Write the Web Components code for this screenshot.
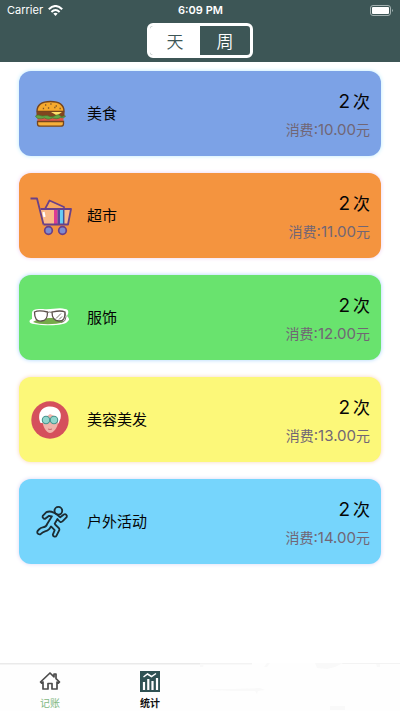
<!DOCTYPE html>
<html lang="zh-CN">
<head>
<meta charset="utf-8">
<meta name="viewport" content="width=device-width, initial-scale=1">
<title>统计</title>
<style>
body{margin:0;background:#fff;color:#050505;font-family:Inter,"Noto Sans CJK SC",sans-serif}
</style>
</head>
<body>
<ledger-app></ledger-app>
<script>
const define=(name,html)=>customElements.define(name,class extends HTMLElement{
  connectedCallback(){
    if(this.shadowRoot)return;
    const t=document.createElement('template');
    t.innerHTML=typeof html==='function'?html(this):html;
    this.attachShadow({mode:'open'}).append(t.content.cloneNode(true));
    const buttons=this.shadowRoot.querySelectorAll('[data-segment]');
    buttons.forEach(b=>b.addEventListener('click',()=>buttons.forEach(o=>o.setAttribute('aria-pressed',String(o===b)))));
  }
});

const icons={
burger:`<path d="M12 17.500C12 10 17 7.500 25.500 7.500S39 10 39 17.500z" fill="#f6a92c" stroke="#74451f" stroke-width="1.400"/><path d="M11.500 18h28v5h-28z" fill="#81451f"/><path d="M26 18h11l-5 3.500z" fill="#ffe16a"/><path d="M12.500 24h26v4h-26z" fill="#e0574a"/><path d="M10.500 22c3-2 5 0 7 0s4-1 6 0 4 1 6 0 4-2 6 0 3-1 5 0c-1 2-3 2-5 1.500-3 2-6 1-8 .5-4 2-6 1-8 0-4 1.500-8 1-9-2z" fill="#61a443" stroke="#426d2c" stroke-width=".6"/><path d="M12.500 27.500h26V30c0 1.500-1 2.200-3 2.200h-20c-2 0-3-.7-3-2.200z" fill="#f7b13a" stroke="#74451f" stroke-width="1.300"/><path d="M20 11h1.300m4-1h1.300m4 2h1.300m-9 2h1.300m5-.5h1.300m4 1h1.300m-18 0h1.300" stroke="#7f5628" stroke-width="1.300"/>`,
cart:`<path d="m20 13 4.500-8.500L39 11v2" fill="#f7a75f" stroke="#6a4088" stroke-width="1.700" stroke-linejoin="round"/><path d="M15.500 13H46l-3 15.500H18.500z" fill="#fab988"/><path d="M29 13h3.500v15H29z" fill="#dc3a94"/><path d="M32.500 13H35v15h-2.500z" fill="#5b4699"/><path d="M35 13h3v15h-3z" fill="#66cdf5"/><path d="M38.700 13v15" stroke="#3d559d" stroke-width="1.500"/><path d="m18.500 16 1 5" stroke="#fff" stroke-width="2.200"/><g fill="none" stroke="#6a4088" stroke-width="1.800" stroke-linejoin="round"><path d="M15.500 13H46l-3 15.500H18.500"/><path d="M5.500 2.500h6.500l6.500 26"/></g><g fill="#7f8cd0" stroke="#6a4088" stroke-width="1.700"><circle cx="23.500" cy="34.500" r="3.800"/><circle cx="37.500" cy="34.500" r="3.800"/></g>`,
glasses:`<path d="M7 15c0-4 5-4 11-4 8 1 16-2 22 0 4 0 4 4 2 7 2 2 3 4 1 5-2 5-23 5-34 3-5 0-6-4-2-5z" fill="#fff"/><path d="M8 24c4-3 12-4 19-4 6 1 10 1 12 4-9 3-24 3-31 0z" fill="#75aa49"/><g fill="#fff" stroke="#5c504b" stroke-width="1.300"><path d="M9.500 14c4-2 9-1 13 0 0 5-1 9-6 9-5 1-7-3-7-9z"/><path d="M27 14c5-1 9-2 13 0 0 6-1 9-6 9s-7-4-7-9z"/></g><path d="M22.500 14.500q2-1 4.500 0m13 0 1 4-1 4-4 2m-5-4 5-5m-2 6 3-3" fill="none" stroke="#79746e"/>`,
face:`<circle cx="25" cy="20" r="18.700" fill="#d5505c"/><path d="M15.500 23c-4-9 1-16.500 9.500-16.500 8 0 12 5 10.500 12l-2 5z" fill="#fff"/><path d="M17.500 19c1-5 4-6 8-6 5 0 7.500 4 7.500 9 0 6-5 11-8 11s-8-6-7.500-14z" fill="#efb3aa"/><path d="M17 18c3-1 6-2 8-4 3 1 6 3 8 4 0-5-3-8-8-8s-8 3-8 8z" fill="#fff"/><g fill="#92d6cd" stroke="#46958f" stroke-width="1.100"><circle cx="21" cy="20" r="3.700"/><circle cx="29" cy="20" r="3.700"/></g><path d="M23 29q2 1 4 0" fill="none" stroke="#c86b71"/>`,
runner:`<g transform="translate(3 .5) scale(.92)" fill="none" stroke="#1d2d33" stroke-width="2" stroke-linecap="round" stroke-linejoin="round"><circle cx="33" cy="9" r="4.200"/><path d="M28 11c-3-1.500-6-1.500-8-.5l-4 4c-1 2 2 4 3 3l4-3 3 .5-5 8c-1 3-2 4-5 4-3 .5-6 4-6 5 0 3 3 3 4 2 3-3 6-2 9-5l2-3 4 4-2 5c0 2 3 3 4 1l3-6c1-3-4-4-5-7l3-5c3 4 4 4 6 2l4-4c1-2-1-4-3-3l-4 3c-2-1-2-3-7-5z"/></g>`
};

define('status-strip',`<style>
:host{display:grid;grid-template-columns:1fr auto 1fr;align-items:center;height:20px;padding:0 6px 0 7px;color:#fff;font-size:11px;line-height:20px}
.left{display:flex;align-items:center;gap:5px}strong{font-weight:600}.battery{justify-self:end}
svg{display:block}</style>
<span class="left"><span>Carrier</span><svg width="15" height="11" viewBox="0 0 15 11" fill="none" stroke="#fff" stroke-width="2" aria-hidden="true"><path d="M.8 4.300Q7.500-2.300 14.200 4.300M3.400 6.900q4.100-3.800 8.200 0"/><path d="M5.300 8.600Q7.500 6.800 9.700 8.600L7.500 11z" fill="#fff" stroke="none"/></svg></span>
<strong>6:09 PM</strong>
<svg class="battery" width="24" height="11" viewBox="0 0 24 11" aria-hidden="true"><rect x=".5" y=".5" width="20" height="10" rx="2.500" fill="none" stroke="#a3b1b1"/><rect x="2" y="2" width="17" height="7" rx="1" fill="#fff"/><path d="M22 4q2 1.500 0 3z" fill="#a3b1b1"/></svg>`);

define('period-switch',`<style>
:host{display:flex;box-sizing:border-box;width:106px;height:35px;border:3px solid #fff;border-radius:6px;overflow:hidden}
button{flex:1;margin:0;padding:0;border:0;border-radius:0;background:transparent;color:#fff;font:350 17px/28px "Noto Sans CJK SC",sans-serif}
button[aria-pressed=true]{background:#fff;color:#3d5656}</style>
<button type="button" data-segment aria-pressed="true">天</button><button type="button" data-segment aria-pressed="false">周</button>`);

define('expense-card',el=>`<style>
:host{display:flex;align-items:center;box-sizing:border-box;height:85px;padding:0 11px 0 6px;border-radius:12px;background:var(--fill);box-shadow:0 0 4px var(--glow)}
svg{width:50px;height:40px;flex:none}
.name{flex:1;margin-left:12px;font-size:15px;line-height:20px}
.totals{padding-top:3px;text-align:right}
.count{display:flex;justify-content:flex-end;align-items:baseline;gap:3px;font-size:17px;line-height:27px}
.count b{font-weight:400;font-size:19px}
.spent{color:#716675;font-size:14px;line-height:27px}
.spent span{font-size:15px}
</style><svg viewBox="0 0 50 40" aria-hidden="true">${icons[el.getAttribute('icon')]}</svg>
<span class="name"><slot></slot></span><div class="totals"><div class="count"><b>2</b><span>次</span></div><div class="spent">消费<span>:${el.getAttribute('amount')}</span>元</div></div>`);

define('tab-item',`<style>
:host{display:block}
a{display:flex;flex-direction:column;align-items:center;gap:4px;padding-top:7px;color:inherit;text-decoration:none;font-size:10px;line-height:14px}
</style><a href="#"><slot name="icon"></slot><slot></slot></a>`);

define('tab-dock',`<style>
:host{display:block;position:relative;height:48px;background:#fefefe}
nav{display:grid;grid-template-columns:repeat(4,1fr)}
.rule{position:absolute;top:0;left:0;width:100%;height:48px;pointer-events:none}
svg{display:block}.home{color:#7fb77f}.stats{color:#111;font-weight:600}
</style><svg class="rule" viewBox="0 0 400 48" preserveAspectRatio="none" aria-hidden="true"><path d="M0 0H200V1.500H0z" fill="#eaeaea"/><path d="M200 0h52v1.500h-52zM342 0h58v1h-58z" fill="#f3f3f3"/><path d="M315 0h28l-8 4-8 2-10-1zM376 1h4v3h-3zM200 1h4l-1 3h-3zM210 26h22l28-1 5 2-7 1-1 3-2-3h-22l-23-1zM330 43h15v4h-15zM264 4l3-4h3l-3 4z" fill="#f9f9f9"/></svg>
<nav><tab-item class="home"><svg slot="icon" width="22" height="22" viewBox="0 0 22 22" fill="none" stroke="#4c4c4c" stroke-width="1.700" stroke-linejoin="round" aria-hidden="true"><path d="M11 3 1.500 12l1.200 1.200L4 12v7h5v-5.500h4V19h5v-7l1.300 1.200 1.200-1.200-3.500-3.400V4h-2v2.800z"/></svg>记账</tab-item>
<tab-item class="stats"><svg slot="icon" width="22" height="22" viewBox="0 0 22 22" aria-hidden="true"><path d="M1 1h20v21H1z" fill="#2f5153"/><g fill="none" stroke="#fff"><path d="m4.500 7 4-3 4 2.500L17 3.500" stroke-width="1.500"/><path d="M5 12v8m4.300-11v11m4.200-9v9M18 8v12" stroke-width="2.200"/></g></svg>统计</tab-item></nav>`);

define('ledger-app',`<style>
:host{display:flex;flex-direction:column;min-height:100vh}
header{background:#3d5656;padding-bottom:4px}
period-switch{margin:3px auto 0}
main{flex:1;display:flex;flex-direction:column;gap:17px;padding:9px 19px 17px 19px}
</style><header><status-strip></status-strip><period-switch></period-switch></header>
<main>
<expense-card icon="burger" amount="10.00" style="--fill:#7ca2e6;--glow:#b9eaff">美食</expense-card>
<expense-card icon="cart" amount="11.00" style="--fill:#f4943f;--glow:#efcfee">超市</expense-card>
<expense-card icon="glasses" amount="12.00" style="--fill:#69e36e;--glow:#a9d3fc">服饰</expense-card>
<expense-card icon="face" amount="13.00" style="--fill:#fcf879;--glow:#f8d5ba">美容美发</expense-card>
<expense-card icon="runner" amount="14.00" style="--fill:#76d5fc;--glow:#d8d5f4">户外活动</expense-card>
</main><tab-dock></tab-dock>`);
</script>
</body>
</html>
